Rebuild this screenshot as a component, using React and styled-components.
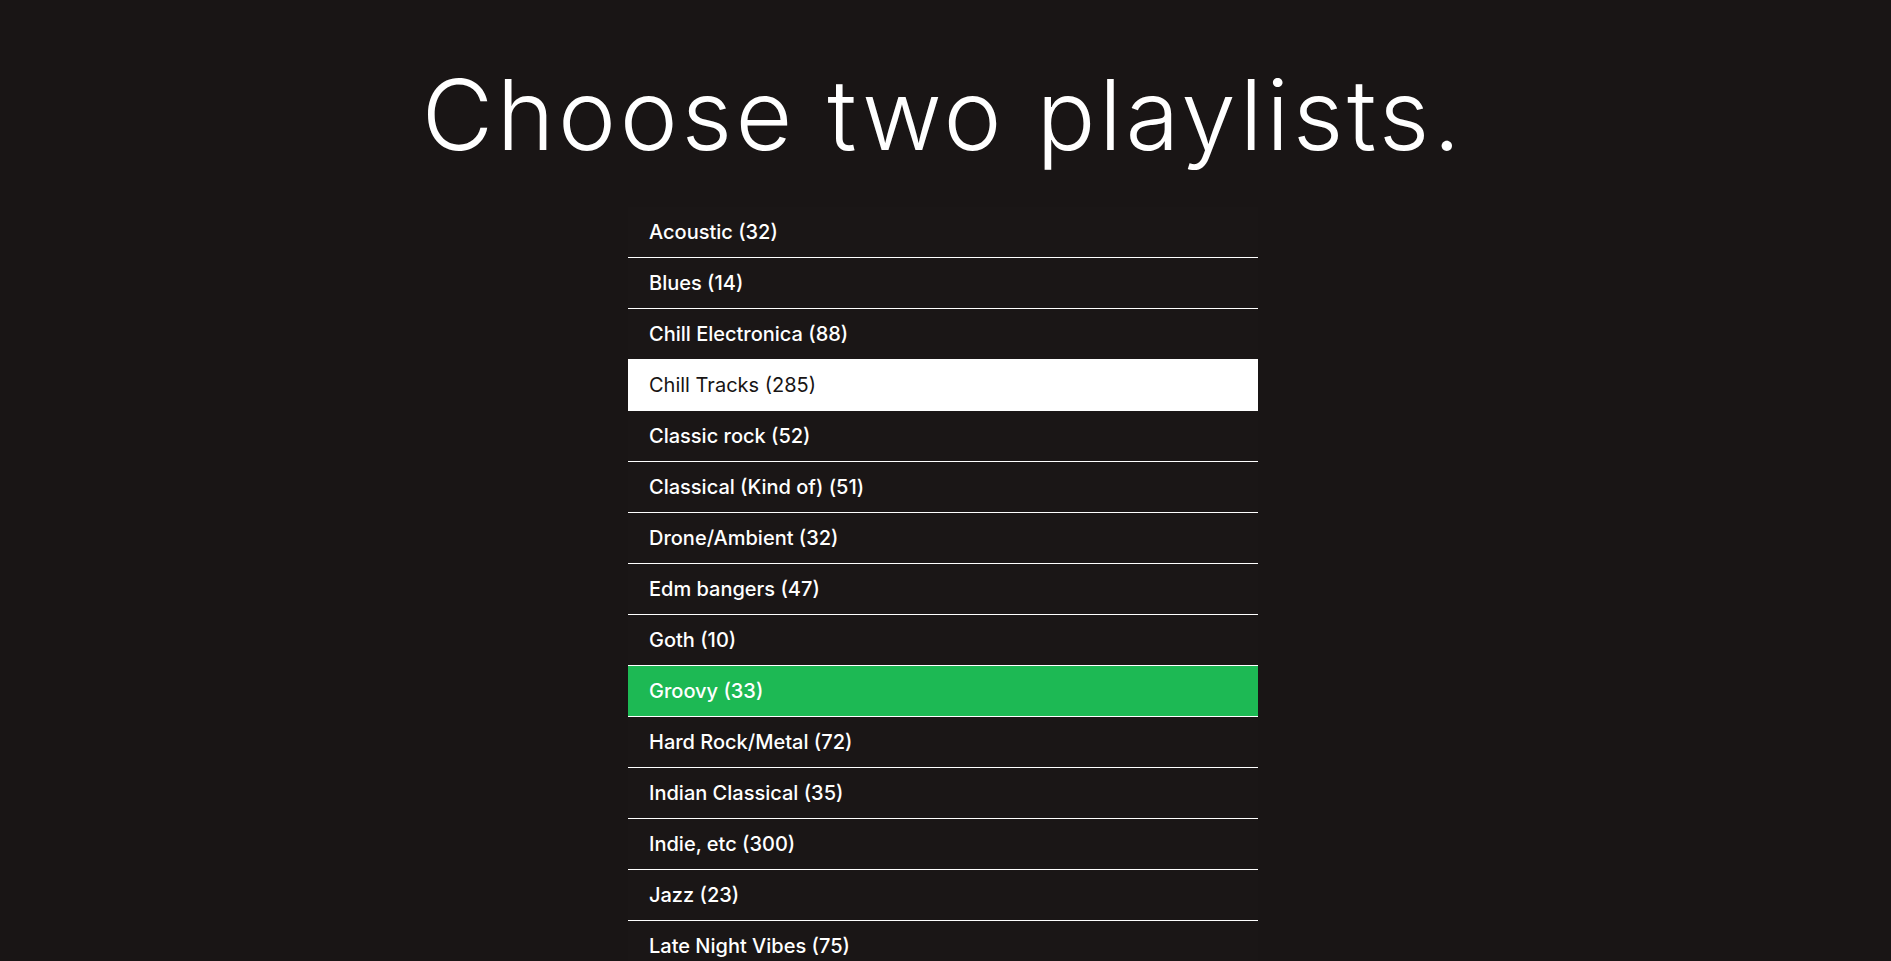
import React, { useState } from "react";
import styled, { createGlobalStyle } from "styled-components";

const GlobalStyle = createGlobalStyle`
  html, body {
    margin: 0;
    padding: 0;
    background: #191515;
  }
  body {
    font-family: Inter, "Open Sans", "DejaVu Sans", sans-serif;
    color: #ffffff;
  }
`;

const Page = styled.main`
  display: flex;
  flex-direction: column;
  align-items: center;
  padding: 61px 5px 0 0;
`;

const Title = styled.h1`
  margin: 0 0 38px;
  font-family: Inter, "Open Sans", sans-serif;
  font-weight: 300;
  font-size: 98px;
  line-height: 1.1;
  letter-spacing: 3.6px;
  color: #ffffff;
`;

const List = styled.ul`
  list-style: none;
  margin: 0;
  padding: 0;
  width: 630px;
  background: #1a1616;
`;

const Row = styled.li`
  display: flex;
  align-items: center;
  height: 50px;
  padding: 0 21px;
  border-bottom: 1px solid #ffffff;
  font-size: 20px;
  cursor: pointer;
  background: ${(p) =>
    p.$state === "first" ? "#ffffff" : p.$state === "second" ? "#1db954" : "transparent"};
  color: ${(p) => (p.$state === "first" ? "#181414" : "#ffffff")};
  font-weight: ${(p) => (p.$state === "first" ? 400 : 500)};
`;

const playlists = [
  ["Acoustic", 32],
  ["Blues", 14],
  ["Chill Electronica", 88],
  ["Chill Tracks", 285],
  ["Classic rock", 52],
  ["Classical (Kind of)", 51],
  ["Drone/Ambient", 32],
  ["Edm bangers", 47],
  ["Goth", 10],
  ["Groovy", 33],
  ["Hard Rock/Metal", 72],
  ["Indian Classical", 35],
  ["Indie, etc", 300],
  ["Jazz", 23],
  ["Late Night Vibes", 75],
];

export default function App() {
  const [first, setFirst] = useState("Chill Tracks");
  const [second, setSecond] = useState("Groovy");

  const pick = (name) => {
    if (name === first) return setFirst(null);
    if (name === second) return setSecond(null);
    if (!first) return setFirst(name);
    setSecond(name);
  };

  return (
    <>
      <GlobalStyle />
      <Page>
        <Title>Choose two playlists.</Title>
        <List>
          {playlists.map(([name, count]) => (
            <Row
              key={name}
              $state={name === first ? "first" : name === second ? "second" : "none"}
              onClick={() => pick(name)}
            >
              {name} ({count})
            </Row>
          ))}
        </List>
      </Page>
    </>
  );
}
